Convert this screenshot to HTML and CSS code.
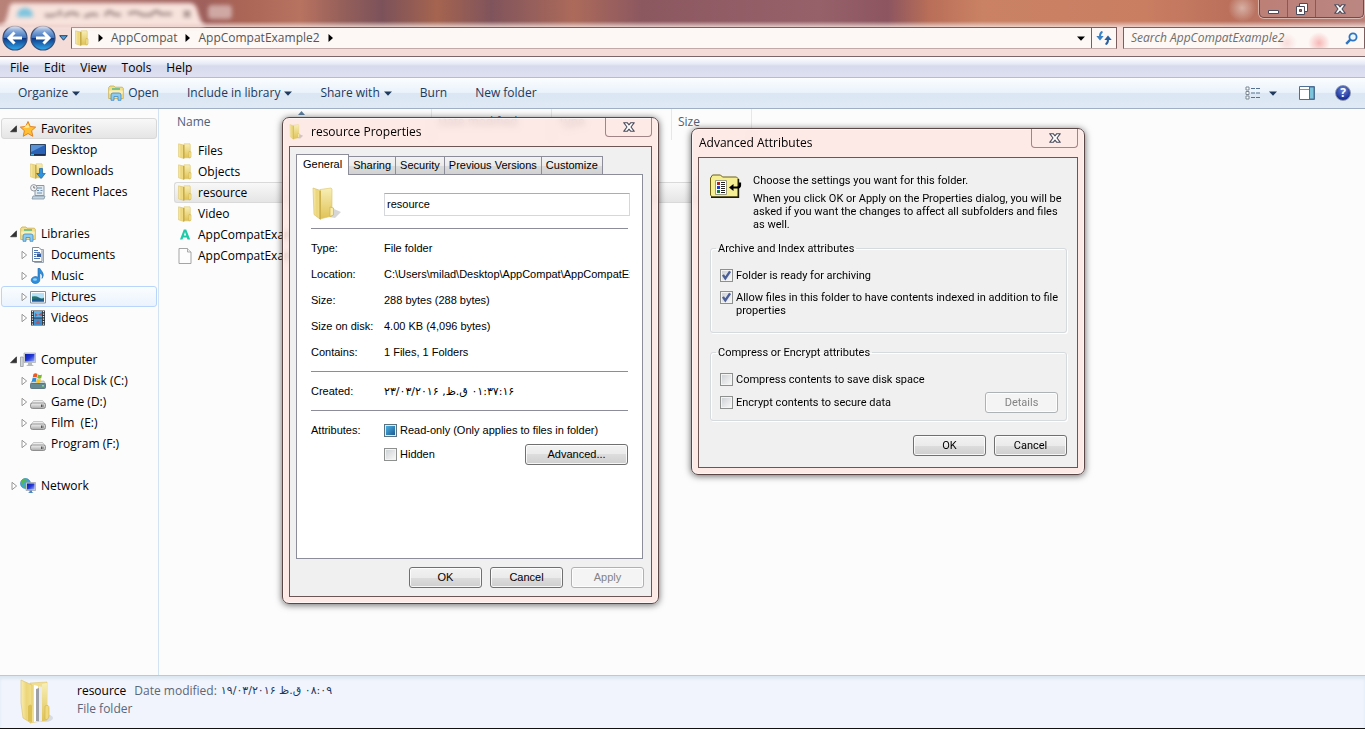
FILE: index.html
```html
<!DOCTYPE html>
<html lang="en">
<head>
<meta charset="utf-8">
<title>AppCompatExample2</title>
<link rel="stylesheet" href="styles.css">
</head>
<body>
<svg class="sprite" aria-hidden="true">
  <defs>
    <linearGradient id="gFold" x1="0" x2="1"><stop offset="0" stop-color="#f9eeb0"/><stop offset=".5" stop-color="#ecd57a"/><stop offset="1" stop-color="#f3e08a"/></linearGradient>
    <linearGradient id="gBack" x1="0" x2="0" y1="0" y2="1"><stop offset="0" stop-color="#f8efb6"/><stop offset="1" stop-color="#e0c255"/></linearGradient>
    <linearGradient id="gBlue" x1="0" x2="0" y1="0" y2="1"><stop offset="0" stop-color="#b9d3f0"/><stop offset=".48" stop-color="#3f73bd"/><stop offset=".5" stop-color="#0d3583"/><stop offset="1" stop-color="#2fa9ee"/></linearGradient>
    <linearGradient id="gScreen" x1="0" x2="1" y1="0" y2="1"><stop offset="0" stop-color="#0a1ea8"/><stop offset=".5" stop-color="#2438d8"/><stop offset="1" stop-color="#9fb2f5"/></linearGradient>
    <linearGradient id="gDrive" x1="0" x2="0" y1="0" y2="1"><stop offset="0" stop-color="#f4f4f4"/><stop offset="1" stop-color="#a9a9a9"/></linearGradient>
    <symbol id="folder" viewBox="0 0 16 16">
      <path d="M7 .8h6l.3 1v13H7z" fill="url(#gBack)" stroke="#d9bf62" stroke-width=".5"/>
      <path d="M1.500.8L6.800 2v13.500L1.500 13.800z" fill="url(#gFold)" stroke="#d8bd5a" stroke-width=".5"/>
      <path d="M6.800 2v13.500" stroke="#b4952f" stroke-width=".9"/>
      <path d="M12 8.500l2 .4v5.200l-2 .9z" fill="#f6e79b" stroke="#c8a93d" stroke-width=".5"/>
    </symbol>
    <symbol id="bigfolder" viewBox="0 0 32 34">
      <path d="M18 30l6 1 6-6-7-3z" fill="#000" opacity=".16"/>
      <path d="M9 2.500l11-1.500 1 1v27L9 32z" fill="url(#gBack)" stroke="#dcc467" stroke-width=".6"/>
      <path d="M2 1l7.500 2.500v29L3 27.500z" fill="url(#gFold)" stroke="#d5bc5c" stroke-width=".6"/>
      <path d="M9 4v28" stroke="#b99b35" stroke-width="1"/>
      <path d="M19 20l3.500 1v7L19 29.500z" fill="#f8ecae" stroke="#cfb24c" stroke-width=".7"/>
    </symbol>
    <symbol id="fullfolder" viewBox="0 0 36 46">
      <ellipse cx="25" cy="39" rx="8" ry="4" fill="#000" opacity=".1"/>
      <path d="M10 4l17-1v38l-17 3z" fill="#f1df8e" stroke="#d9bf66" stroke-width=".5"/>
      <path d="M14 6l4 1v35l-4 1z" fill="#fff"/><path d="M16 10l3-1v33h-3z" fill="#9da0a6"/><path d="M19 7l3 1v34l-3 1z" fill="#e9ebef"/>
      <path d="M22 5l5-1v37l-5 1z" fill="url(#gBack)"/>
      <path d="M1 1l11 5v20l-1 18L3 39 1 24z" fill="url(#gFold)" stroke="#d9bf66" stroke-width=".6"/>
      <path d="M8 27q3-3 4 0v16l-4-1z" fill="#dcbf55"/>
      <path d="M25 27q4-2 4 2v8q-1 5-4 3z" fill="#f0da7d" stroke="#d0b14c" stroke-width=".6"/>
    </symbol>
    <symbol id="lib" viewBox="0 0 16 16">
      <path d="M.7 13.500V2.500L2 1h4l1 1.200h7.300l1 1v10.300z" fill="#f2e08e" stroke="#c9ac4a" stroke-width=".8"/>
      <path d="M4 3h8v2H4z" fill="#7fc18a"/><path d="M1.200 5.500h13.600v3H1.200z" fill="#f9efba"/>
      <path d="M3 15.300V10q0-2 2-2h6q2 0 2 2v5.300h-3V11.500H6v3.800z" fill="#8ecbf0" stroke="#3f8cc6" stroke-width=".8"/>
    </symbol>
    <symbol id="star" viewBox="0 0 16 16"><path d="M8 .5l2.300 5 5.400.6-4.100 3.600 1.200 5.600L8 12.500l-4.800 2.800 1.200-5.600L.3 6.100l5.400-.6z" fill="#ffbf34" stroke="#e07b16" stroke-width=".9"/><path d="M8 3l1.500 3.500-6 .5z" fill="#fff0a0"/></symbol>
    <symbol id="desktop" viewBox="0 0 16 16"><path d="M.5 2.500h15v11H.5z" fill="#2a62b8" stroke="#30455f"/><path d="M1 3h14L1 10z" fill="#6fa8e4" opacity=".7"/><path d="M1 12h14v1.500H1z" fill="#1b2e52"/><path d="M1 12h3v1.500H1z" fill="#47b6e6"/></symbol>
    <symbol id="downloads" viewBox="0 0 16 16"><use href="#folder" x="-1"/><path d="M9.500 5.500h3v5h2.800L11 15.500l-4.300-5h2.800z" fill="#2d93e0" stroke="#1b66ad" stroke-width=".7"/></symbol>
    <symbol id="recent" viewBox="0 0 16 16"><path d="M5 1.500h9v10H5z" fill="#e2eaf1" stroke="#8b99a6"/><path d="M7 4h5M7 6.500h2M10.500 6.500h2M7 9h5" stroke="#6a8fb0"/><path d="M3 12h12l-1 3H2z" fill="#c4d4df" stroke="#8295a3" stroke-width=".8"/><circle cx="3.800" cy="3.800" r="3.200" fill="#f2f4f5" stroke="#8a9095" stroke-width=".9"/><path d="M3.800 2v2h1.500" fill="none" stroke="#555" stroke-width=".8"/></symbol>
    <symbol id="document" viewBox="0 0 16 16"><path d="M4.500 2.500h9v13h-9z" fill="#fff" stroke="#9aa5b3"/><path d="M2.500.5H9l3 3v11H2.500z" fill="#fff" stroke="#7f8c9c"/><path d="M4 3.500h4M4 5.500h6M4 7.500h2.500M4 9.500h2.500M4 11.500h6" stroke="#4c76b5"/><path d="M7 6.500h4v3.500H7z" fill="#335b9b"/></symbol>
    <symbol id="music" viewBox="0 0 16 16"><path d="M8 .3v8.900A4.300 3.500 0 1 0 9.800 12V5c2.200.8 3 2.600 2.200 5.400C15 6 12 4 9.800.3z" fill="#2f8fdb" stroke="#1b62a8" stroke-width=".6"/><ellipse cx="5" cy="11.500" rx="2" ry="1.300" fill="#8fd2fa"/></symbol>
    <symbol id="picture" viewBox="0 0 16 16"><path d="M.5 2.500h15v11.500H.5z" fill="#fff" stroke="#8191a2"/><path d="M2 4h12v8.500H2z" fill="#b5e1f8"/><path d="M2 7.500q4-1 7 1t5 0v4H2z" fill="#24756a"/><path d="M2 10.500q6-2 12 0v2H2z" fill="#1e5b94"/></symbol>
    <symbol id="video" viewBox="0 0 16 16"><path d="M1 .5h14v15H1z" fill="#2c333b"/><path d="M4 1h8v6.500H4z" fill="#5eb4e8"/><path d="M4 8.500h8V15H4z" fill="#3f8fd0"/><path d="M5 3l3 2 4-3v4l-4-1-3 2zM5 14l3-4 3 4z" fill="#a95a6a"/><path d="M2.500 1v14M13.500 1v14" stroke="#e9edf0" stroke-width="1.300" stroke-dasharray="1.300 1.200"/></symbol>
    <symbol id="computer" viewBox="0 0 16 16"><path d="M.5 5h2.700v9.500H.5z" fill="#d5d8da" stroke="#8d9296" stroke-width=".7"/><path d="M4 1h11.500v9.500H4z" fill="#d7dade" stroke="#999fa6" stroke-width=".6"/><path d="M5 2h9.500v7.500H5z" fill="url(#gScreen)"/><path d="M8 10.500h4v2l2 1.500H6l2-1.500z" fill="#b6babd"/></symbol>
    <symbol id="drive" viewBox="0 0 16 16"><path d="M3.500 6.500h9l3 3.500H.5z" fill="#ececec" stroke="#aaa" stroke-width=".6"/><rect x=".5" y="9" width="15" height="5.500" rx="2" fill="url(#gDrive)" stroke="#7e7e7e" stroke-width=".8"/><path d="M11 10.500h1.500v2.500H11z" fill="#555"/><path d="M13 10.500h1v2.500h-1z" fill="#83b37c"/></symbol>
    <symbol id="sysdrive" viewBox="0 0 16 16"><path d="M2 8h12l1.500 3H.5z" fill="#cdd9d6" stroke="#8d9b99" stroke-width=".6"/><rect x=".5" y="10.500" width="15" height="5" rx="1" fill="#648a94" stroke="#4c6873" stroke-width=".8"/><path d="M12 12h2v1.500h-2z" fill="#7fe07a"/><path d="M3.500 1q2-1.500 4 0L6.700 4.500q-2-1-4 0z" fill="#ea5a24"/><path d="M8 1.500q2 1 4 0l-.8 3.700q-2 1-4-.2z" fill="#7db928"/><path d="M2.500 5.300q2-1 4 0L5.700 9q-2-1.200-4 0z" fill="#2b8fdd"/><path d="M7 5.800q2 1 4 0l-.8 3.700q-2 1-4-.2z" fill="#fbc41d"/></symbol>
    <symbol id="network" viewBox="0 0 16 16"><circle cx="5.500" cy="5.500" r="5" fill="#3fa5e3" stroke="#2479b5" stroke-width=".6"/><path d="M1 4q2-4 5-3.300Q8 2 5 4T4 7 1 6zM4 8l3-1v3H5z" fill="#55b84e"/><path d="M6 4.500h9.500v8H6z" fill="#d5dae0" stroke="#8f969e" stroke-width=".6"/><path d="M7 5.500h7.500V11.500H7z" fill="url(#gScreen)"/><path d="M9.500 12.500h2.500v1.500l1.500 1H8l1.500-1z" fill="#4b86c6"/></symbol>
    <symbol id="file" viewBox="0 0 16 16"><path d="M2 .5h8.500L14 4v11.500H2z" fill="#fdfdfd" stroke="#9b9b9b" stroke-width=".9"/><path d="M10.500.5V4H14" fill="#eee" stroke="#9b9b9b" stroke-width=".8"/></symbol>
    <symbol id="appfile" viewBox="0 0 16 16"><path d="M3 12.500L6.800 2.500h2.400l4 10h-2.700l-.7-2H6.200l-.7 2zM6.900 8.500h2.300L8 5z" fill="#20c9a8" fill-rule="evenodd"/></symbol>
    <symbol id="open" viewBox="0 0 8 8"><path d="M6.500.8v6h-6z" fill="#333" stroke="#222" stroke-width=".6"/></symbol>
    <symbol id="shut" viewBox="0 0 8 8"><path d="M2 .3v7.400L6.600 4z" fill="#fff" stroke="#8c8c8c" stroke-width=".9"/></symbol>
    <symbol id="down" viewBox="0 0 8 5"><path d="M0 .5h8L4 4.700z" fill="currentColor"/></symbol>
    <symbol id="right" viewBox="0 0 5 8"><path d="M.5 0L5 4 .5 8z" fill="#000"/></symbol>
    <symbol id="close" viewBox="0 0 12 10"><path d="M.7.700h3.500L6 2.900 7.800.700h3.500L8 5l3.300 4.300H7.800L6 7.100 4.200 9.300H.700L4 5z" fill="#fff" stroke="#4a4b5c" stroke-width="1.100" stroke-linejoin="round"/></symbol>
  </defs>
</svg>

<main class="explorer">
  <header class="glass">
    <div class="caption">
      <svg class="ghost" viewBox="0 0 240 27" aria-hidden="true">
        <path d="M2 27Q7 20 9 8q1-5 5-5h176q5 0 7 6 3 12 8 18z" fill="#f8e2dc"/>
        <rect x="208" y="5" width="24" height="14" rx="4" fill="#cfa8a4"/>
        <path d="M17 17q0-9 8-9t8 9z" fill="#7cc4de"/>
        <path d="M45 15q6 2 12-1M60 10v6M64 16q9-6 15 0M84 17q10-5 14-1M105 16q4-8 8-2l8 1M128 14q8-4 14 1h9q6-7 9-1h12M184 11l6 6M190 11l-6 6" fill="none" stroke="#a08c88" stroke-width="3"/>
      </svg>
      <div class="winbuttons">
        <button aria-label="Minimize"><svg width="13" height="12" viewBox="0 0 13 12"><path d="M1.500 7.500h10v3h-10z" fill="#fff" stroke="#4a4b5c"/></svg></button>
        <button aria-label="Restore"><svg width="12" height="12" viewBox="0 0 12 12"><path d="M3.500.5h8v8h-8z" fill="#fff" stroke="#4a4b5c"/><path d="M.5 3.500h8v8h-8z" fill="#fff" stroke="#4a4b5c"/><path d="M3.500 6.500h2v2h-2z" fill="#8d6a6c" stroke="#4a4b5c"/></svg></button>
        <button class="wide" aria-label="Close"><svg width="12" height="10"><use href="#close"/></svg></button>
      </div>
    </div>
    <div class="addressrow">
      <button class="round" aria-label="Back"><svg width="26" height="26" viewBox="0 0 26 26"><circle cx="13" cy="13" r="12" fill="url(#gBlue)" stroke="#3a4d77" stroke-width="1.200"/><path d="M20 13H8M12.500 7.500L7 13l5.500 5.500" fill="none" stroke="#fff" stroke-width="3"/></svg></button>
      <button class="round" aria-label="Forward"><svg width="26" height="26" viewBox="0 0 26 26"><circle cx="13" cy="13" r="12" fill="url(#gBlue)" stroke="#3a4d77" stroke-width="1.200"/><path d="M6 13h12M13.500 7.500L19 13l-5.500 5.500" fill="none" stroke="#fff" stroke-width="3"/></svg></button>
      <button class="recentpages" aria-label="Recent pages"><svg width="9" height="6" viewBox="0 0 9 6"><path d="M.7.700h7.600L4.500 5.200z" fill="#4fa0dc" stroke="#1d3f66"/></svg></button>
      <nav class="address" aria-label="Address">
        <svg width="16" height="16"><use href="#folder"/></svg>
        <svg class="crumb" width="5" height="8"><use href="#right"/></svg>
        <a href="#">AppCompat</a>
        <svg class="crumb" width="5" height="8"><use href="#right"/></svg>
        <a href="#">AppCompatExample2</a>
        <svg class="crumb" width="5" height="8"><use href="#right"/></svg>
        <button class="drop" aria-label="Previous locations"><svg width="8" height="5"><use href="#down"/></svg></button>
        <button class="refresh" aria-label="Refresh"><svg width="16" height="14" viewBox="0 0 16 14"><path d="M6.500.8Q3.800 1.500 4 6" fill="none" stroke="#3a82c4" stroke-width="2"/><path d="M.3 5h7.400L4 9.500z" fill="#3a82c4"/><path d="M9.500 13.200q2.700-.7 2.500-5.200" fill="none" stroke="#2a5f9e" stroke-width="2"/><path d="M8.300 9h7.400L12 4.500z" fill="#2a5f9e"/></svg></button>
      </nav>
      <form class="search">
        <input type="search" aria-label="Search" placeholder="Search AppCompatExample2">
        <svg width="13" height="13" viewBox="0 0 13 13"><circle cx="8" cy="5" r="3.600" fill="#eef6fd" stroke="#2f74c0" stroke-width="1.800"/><path d="M5.300 7.700L1.200 11.800" stroke="#2f74c0" stroke-width="2.400"/></svg>
      </form>
    </div>
  </header>

  <nav class="menubar" aria-label="Menu">
    <button>File</button><button>Edit</button><button>View</button><button>Tools</button><button>Help</button>
  </nav>

  <div class="toolbar">
    <button>Organize <svg width="8" height="5"><use href="#down"/></svg></button>
    <button><svg width="16" height="16"><use href="#lib"/></svg>Open</button>
    <button>Include in library <svg width="8" height="5"><use href="#down"/></svg></button>
    <button>Share with <svg width="8" height="5"><use href="#down"/></svg></button>
    <button>Burn</button>
    <button>New folder</button>
    <div class="tools">
      <button aria-label="Change view"><svg width="16" height="14" viewBox="0 0 16 14"><path d="M1 1h3v3H1zM1 5.500h3v3H1zM1 10h3v3H1z" fill="#fff" stroke="#7b8794"/><path d="M6 2.500h4M11 2.500h4M6 7h4M11 7h4M6 11.500h4M11 11.500h4" stroke="#56708f"/></svg></button>
      <button aria-label="More views"><svg width="8" height="5"><use href="#down"/></svg></button>
      <button class="pane" aria-label="Preview pane"><svg width="16" height="14" viewBox="0 0 16 14"><path d="M.5.5h15v13H.5z" fill="#fff" stroke="#4e6f93"/><path d="M1 3.500h9.500" stroke="#7a96b3"/><path d="M10.500 1h4.500v12h-4.500z" fill="#7cc3dc" stroke="#4e6f93"/></svg></button>
      <button class="help" aria-label="Help">?</button>
    </div>
  </div>

  <div class="content">
    <nav class="tree" aria-label="Folders">
      <ul>
        <li class="head current"><svg class="tw"><use href="#open"/></svg><svg class="ic"><use href="#star"/></svg>Favorites</li>
        <li><svg class="ic"><use href="#desktop"/></svg>Desktop</li>
        <li><svg class="ic"><use href="#downloads"/></svg>Downloads</li>
        <li><svg class="ic"><use href="#recent"/></svg>Recent Places</li>
      </ul>
      <ul>
        <li class="head"><svg class="tw"><use href="#open"/></svg><svg class="ic"><use href="#lib"/></svg>Libraries</li>
        <li><svg class="tw"><use href="#shut"/></svg><svg class="ic"><use href="#document"/></svg>Documents</li>
        <li><svg class="tw"><use href="#shut"/></svg><svg class="ic"><use href="#music"/></svg>Music</li>
        <li class="hover"><svg class="tw"><use href="#shut"/></svg><svg class="ic"><use href="#picture"/></svg>Pictures</li>
        <li><svg class="tw"><use href="#shut"/></svg><svg class="ic"><use href="#video"/></svg>Videos</li>
      </ul>
      <ul>
        <li class="head"><svg class="tw"><use href="#open"/></svg><svg class="ic"><use href="#computer"/></svg>Computer</li>
        <li><svg class="tw"><use href="#shut"/></svg><svg class="ic"><use href="#sysdrive"/></svg>Local Disk (C:)</li>
        <li><svg class="tw"><use href="#shut"/></svg><svg class="ic"><use href="#drive"/></svg>Game (D:)</li>
        <li><svg class="tw"><use href="#shut"/></svg><svg class="ic"><use href="#drive"/></svg>Film&nbsp; (E:)</li>
        <li><svg class="tw"><use href="#shut"/></svg><svg class="ic"><use href="#drive"/></svg>Program (F:)</li>
      </ul>
      <ul>
        <li class="head"><svg class="tw"><use href="#shut"/></svg><svg class="ic"><use href="#network"/></svg>Network</li>
      </ul>
    </nav>

    <section class="files">
      <table>
        <colgroup><col class="cname"><col class="cdate"><col class="cdate"><col class="csize"></colgroup>
        <thead><tr><th class="sorted">Name<svg width="7" height="4" viewBox="0 0 7 4"><path d="M0 4l3.500-4L7 4z" fill="#5b7f9f"/></svg></th><th>Date modified</th><th>Type</th><th>Size</th></tr></thead>
        <tbody>
          <tr><td><svg class="ic"><use href="#folder"/></svg>Files</td><td></td><td></td><td></td></tr>
          <tr><td><svg class="ic"><use href="#folder"/></svg>Objects</td><td></td><td></td><td></td></tr>
          <tr class="selected"><td><svg class="ic"><use href="#folder"/></svg>resource</td><td></td><td></td><td></td></tr>
          <tr><td><svg class="ic"><use href="#folder"/></svg>Video</td><td></td><td></td><td></td></tr>
          <tr><td><svg class="ic"><use href="#appfile"/></svg>AppCompatExample2</td><td></td><td></td><td></td></tr>
          <tr><td><svg class="ic"><use href="#file"/></svg>AppCompatExample2</td><td></td><td></td><td></td></tr>
        </tbody>
      </table>
    </section>
  </div>

  <footer class="details">
    <svg width="36" height="46"><use href="#fullfolder"/></svg>
    <div>
      <p><strong>resource</strong><span>Date modified:</span><span class="date"><bdi dir="ltr">۱۹/۰۳/۲۰۱۶</bdi> <bdi dir="rtl">ق.ظ</bdi> <bdi dir="ltr">۰۸:۰۹</bdi></span></p>
      <p>File folder</p>
    </div>
  </footer>
</main>

<section class="window properties" role="dialog" aria-labelledby="t1">
  <header class="wintitle">
    <svg width="15" height="16"><use href="#bigfolder"/></svg>
    <h2 id="t1">resource Properties</h2>
    <button class="winclose" aria-label="Close"><svg width="12" height="10"><use href="#close"/></svg></button>
  </header>
  <div class="client">
    <div class="tabs" role="tablist">
      <button role="tab" class="active" aria-selected="true">General</button><button role="tab">Sharing</button><button role="tab">Security</button><button role="tab">Previous Versions</button><button role="tab">Customize</button>
    </div>
    <div class="panel">
      <div class="field top"><svg width="32" height="34"><use href="#bigfolder"/></svg><input type="text" aria-label="Name" value="resource"></div>
      <hr>
      <dl>
        <dt>Type:</dt><dd>File folder</dd>
        <dt>Location:</dt><dd>C:\Users\milad\Desktop\AppCompat\AppCompatExample2</dd>
        <dt>Size:</dt><dd>288 bytes (288 bytes)</dd>
        <dt>Size on disk:</dt><dd>4.00 KB (4,096 bytes)</dd>
        <dt>Contains:</dt><dd>1 Files, 1 Folders</dd>
      </dl>
      <hr>
      <dl>
        <dt>Created:</dt><dd class="date"><bdi dir="ltr">۲۳/۰۳/۲۰۱۶</bdi> ,<bdi dir="rtl">ق.ظ</bdi> <bdi dir="ltr">۰۱:۳۷:۱۶</bdi></dd>
      </dl>
      <hr>
      <div class="field attrs">
        <span>Attributes:</span>
        <div>
          <label><input type="checkbox" class="mixed" checked>Read-only (Only applies to files in folder)</label>
          <div class="split"><label><input type="checkbox">Hidden</label><button class="push advanced">Advanced...</button></div>
        </div>
      </div>
    </div>
    <div class="actions"><button class="push">OK</button><button class="push">Cancel</button><button class="push" disabled>Apply</button></div>
  </div>
</section>

<section class="window advancedattrs" role="dialog" aria-labelledby="t2">
  <header class="wintitle">
    <h2 id="t2">Advanced Attributes</h2>
    <button class="winclose" aria-label="Close"><svg width="12" height="10"><use href="#close"/></svg></button>
  </header>
  <div class="client">
    <div class="intro">
      <svg width="32" height="25" viewBox="0 0 32 25"><path d="M.5 4l2-3h8l2 2h14l1.500 1.500v18.500H2l-1.500-2z" fill="#f5ee92" stroke="#6d6110"/><path d="M1 23.300h27.500V5" fill="none" stroke="#1c1a08" stroke-width="1.400"/><path d="M5.500 6.500h11v14h-11z" fill="#fff" stroke="#9a9a80"/><path d="M7 8h3v3H7z" fill="#b3261e"/><path d="M7 12h3v3H7z" fill="#1b3fd0"/><path d="M7 16h3v3H7z" fill="#1d7a36"/><path d="M11 8.500h4M11 10.500h4M11 12.500h4M11 14.500h4M11 16.500h4M11 18.500h4" stroke="#222"/><path d="M30 8.500v3q0 2-3 2h-4" fill="none" stroke="#000" stroke-width="2.200"/><path d="M19 13.500l4.500-3.500v7z" fill="#000"/></svg>
      <div><p>Choose the settings you want for this folder.</p><p>When you click OK or Apply on the Properties dialog, you will be asked if you want the changes to affect all subfolders and files as well.</p></div>
    </div>
    <fieldset>
      <legend>Archive and Index attributes</legend>
      <label><input type="checkbox" checked>Folder is ready for archiving</label>
      <label><input type="checkbox" checked>Allow files in this folder to have contents indexed in addition to file properties</label>
    </fieldset>
    <fieldset class="compress">
      <legend>Compress or Encrypt attributes</legend>
      <label><input type="checkbox">Compress contents to save disk space</label>
      <div class="split"><label><input type="checkbox">Encrypt contents to secure data</label><button class="push" disabled>Details</button></div>
    </fieldset>
    <div class="actions"><button class="push">OK</button><button class="push">Cancel</button></div>
  </div>
</section>
</body>
</html>
```

FILE: styles.css
```css
* { box-sizing: border-box; }
body { margin: 0; font: 12px/16px "Open Sans", "DejaVu Sans", sans-serif; color: #000; overflow: hidden; }
button, input { font: inherit; color: inherit; }
button { background: none; border: 0; padding: 0; display: inline-flex; align-items: center; justify-content: center; }
svg { flex: none; display: block; }
ul, dl, dd, p, h2 { margin: 0; padding: 0; list-style: none; font-weight: normal; font-size: inherit; }
a { color: inherit; text-decoration: none; }
.sprite { position: absolute; width: 0; height: 0; }
.ic { width: 16px; height: 16px; }
.tw { width: 8px; height: 8px; }

.explorer { display: flex; flex-direction: column; height: 100vh; border-bottom: 1px solid #111; }

/* glass frame */
.glass {
  border-bottom: 1px solid #7b6568;
  background:
    linear-gradient(to bottom, rgba(244,221,217,0) 21px, #f4ddd9 28px),
    radial-gradient(circle 14px at 91% 8px, #d6b0a4, transparent),
    radial-gradient(ellipse 60px 20px at 52% 90%, rgba(180,110,96,.6), transparent),
    linear-gradient(to right, #b98279 0, #9f605c 15%, #ac6656 18%, #b87260 22%, #96605a 25%, #7c525a 28%, #a5644f 32%, #80545c 36%, #ac6a5a 42%, #8c5860 47%, #97616a 60%, #8c5560 65%, #b86e58 68%, #ca8264 72%, #c97e62 84%, #bb705c 90%, #b88078 100%);
}
.caption { height: 25px; display: flex; justify-content: space-between; align-items: flex-start; }
.ghost { width: 240px; height: 27px; filter: blur(2px); margin-bottom: -2px; }
.winbuttons { display: flex; height: 18px; margin-right: 1px; border: 1px solid #6d4a4e; border-top: 0; border-radius: 0 0 5px 5px; box-shadow: 0 0 0 1px rgba(255,255,255,.45); background: rgba(190,140,140,.5); }
.winbuttons button { width: 28px; border-right: 1px solid #805c60; }
.winbuttons .wide { width: 47px; border-right: 0; }
.addressrow { display: flex; align-items: center; height: 31px; padding: 0 0 5px 2px; }
.round { margin-right: 2px; }
.recentpages { margin: 0 3px 0 1px; }
.address { flex: 1; display: flex; align-items: center; height: 22px; padding-left: 2px; border: 1px solid #7b5d5d; border-bottom-color: #c2aaa8; background: #fdf8f5; color: #555; }
.crumb { margin: 0 8px; }
.drop { margin-left: auto; width: 20px; color: #000; }
.refresh { width: 25px; align-self: stretch; border-left: 1px solid #7b5d5d; }
.search { width: 242px; height: 22px; margin-left: 6px; display: flex; align-items: center; border: 1px solid #7b5d5d; border-bottom-color: #c2aaa8; padding: 0 6px 0 7px; background: radial-gradient(circle at 195px 15px, rgba(240,120,120,.5), transparent 11px), radial-gradient(circle at 163px 15px, rgba(240,180,180,.4), transparent 10px), #fdf8f5; }
.search input { flex: 1; min-width: 0; border: 0; padding: 0; background: none; outline: 0; font-style: italic; }
.search input::placeholder { color: #6d6d6d; opacity: 1; }

.menubar { display: flex; gap: 15px; height: 21px; padding: 2px 0 0 10px; background: linear-gradient(#fff, #e6eaf5 35%, #d6daec 45%, #dfe1f2); border-bottom: 1px solid #b6bccc; }
.toolbar { display: flex; height: 31px; padding: 0 14px 0 18px; color: #1e395b; background: linear-gradient(#fbfdff, #eaf2fb 48%, #dbe6f4 52%, #e0eaf6); border-bottom: 1px solid #a0afc3; }
.toolbar button { gap: 4px; margin-right: 28px; }
.tools { display: flex; margin-left: auto; }
.toolbar .tools button { margin: 0 0 0 8px; }
.toolbar .tools .help { margin-left: 20px; }
.toolbar .tools .pane { margin-left: 22px; }
.toolbar .tools .help { align-self: center; width: 16px; height: 16px; border-radius: 50%; background: radial-gradient(circle at 50% 30%, #6c86d8, #1c349a 70%); border: 1px solid #8a93a8; color: #fff; font-weight: bold; }

.content { flex: 1; min-height: 0; display: flex; background: #fcfcfc; }
.tree { width: 159px; padding: 9px 1px 0; border-right: 1px solid #d3e3f1; }
.tree ul { margin-bottom: 21px; }
.tree li { display: flex; align-items: center; height: 21px; padding-left: 28px; border: 1px solid transparent; border-radius: 3px; white-space: nowrap; }
.tree .ic { margin-right: 5px; }
.tree li:has(.tw) { padding-left: 18px; }
.tree li .tw { margin-right: 2px; }
.tree li.head { padding-left: 8px; }
.tree .current { border-color: #d8d8d8; background: linear-gradient(#f8f8f8, #e5e5e5); }
.tree .hover { border-color: #b8d6fb; background: linear-gradient(#fbfdff, #ebf3fd); }

.files { flex: 1; min-width: 0; padding-left: 15px; }
table { table-layout: fixed; width: 578px; border-spacing: 0; }
.cname { width: 258px; }
.cdate { width: 120px; }
.csize { width: 80px; }
th { height: 31px; padding: 0 6px 5px; text-align: left; font-weight: normal; color: #4c607a; border-right: 1px solid #e3e8ee; position: relative; }
th:first-child { padding-left: 3px; }
.sorted svg { position: absolute; top: 2px; left: 124px; }
td { height: 21px; padding: 1px 0 0 3px; border: 1px solid transparent; border-width: 1px 0; white-space: nowrap; }
td .ic { float: left; margin-right: 5px; }
.selected td { border-color: #d9d9d9; background: linear-gradient(#f8f8f8, #e5e5e5); }
.selected td:first-child { border-left-width: 1px; border-radius: 3px 0 0 3px; padding-left: 2px; }

.details { display: flex; height: 53px; padding: 3px 20px; gap: 21px; border-top: 1px solid #b5cbdc; box-shadow: inset 0 3px 3px #dce7f2; background: #f1f4fc; color: #5a6779; }
.details p { display: flex; height: 18px; align-items: center; margin-top: 0; }
.details div { padding-top: 3px; }
.details strong { font-weight: normal; color: #000; margin-right: 8px; }
.details .date { color: #1e395b; margin-left: 4px; font-size: 11px; }
.date { font-family: "DejaVu Sans", sans-serif; }

/* dialogs */
.window { position: absolute; display: flex; flex-direction: column; padding: 0 6px 6px; border: 1px solid #5c4747; border-radius: 7px; background: rgba(253,228,223,.8); backdrop-filter: blur(3px); box-shadow: inset 0 0 0 1px rgba(255,255,255,.6), 0 1px 7px rgba(0,0,0,.6); }
.properties { left: 282px; top: 117px; width: 377px; font-family: "Liberation Sans", sans-serif; font-size: 11px; line-height: 13px; }
.advancedattrs { left: 691px; top: 128px; width: 394px; font-family: Roboto, sans-serif; font-size: 11px; line-height: 13px; }
.wintitle { display: flex; height: 28px; align-items: center; font: 12px/16px "Open Sans", sans-serif; }
.wintitle h2 { margin-left: 1px; }
.wintitle svg + h2 { margin-left: 7px; }
.winclose { align-self: flex-start; margin-left: auto; width: 47px; height: 19px; border: 1px solid #a08486; border-top: 0; border-radius: 0 0 4px 4px; }
.client { border: 1px solid #6b5555; background: #f0f0f0; }
.properties .client { padding: 7px 7px 8px 6px; }
.tabs { display: flex; align-items: flex-end; }
.tabs button { height: 18px; padding: 0 4px; border: 1px solid #8b8e98; border-left-width: 0; border-bottom: 0; background: linear-gradient(#f3f3f3, #ebebeb 50%, #dcdcdc 50%, #d2d2d2); }
.tabs .active { height: 21px; padding: 0 6px 2px; border-left-width: 1px; background: #fff; margin-bottom: -1px; z-index: 1; }
.panel { height: 385px; padding: 12px 14px 0; margin-right: 1px; border: 1px solid #8b8e98; background: #fff; }
.field { display: flex; }
.top { align-items: center; height: 34px; }
.top input { margin-left: auto; width: 246px; height: 23px; padding: 0 2px; border: 1px solid #d5d7dd; border-top-color: #abadb3; margin-right: -2px; }
.panel hr { height: 1px; margin: 7px 0; border: 0; background: #8b8e98; }
.panel dl { display: grid; grid-template-columns: 73px 1fr; row-gap: 13px; padding: 6px 0 5px; margin-right: -2px; }
.panel dd { overflow: hidden; white-space: nowrap; }
.attrs { padding-top: 6px; }
.attrs > span { width: 73px; }
.attrs > div { flex: 1; }
label { display: flex; align-items: flex-start; gap: 3px; }
.split { display: flex; align-items: center; justify-content: space-between; margin-top: 7px; }
input[type=checkbox] { appearance: none; flex: none; width: 13px; height: 13px; margin: 0; border: 1px solid #8e8f8f; background: linear-gradient(135deg, #cfd3d6, #f6f6f6) content-box, #f4f4f4; padding: 1px; }
input[type=checkbox]:checked { background: url("data:image/svg+xml,%3Csvg xmlns='http://www.w3.org/2000/svg' viewBox='0 0 11 11'%3E%3Cpath d='M2.500 5l2 3L8.500 2' fill='none' stroke='%234a5f97' stroke-width='2'/%3E%3C/svg%3E") border-box, linear-gradient(135deg, #cfd3d6, #f6f6f6) content-box, #f4f4f4; }
input[type=checkbox].mixed { padding: 1px; background: linear-gradient(135deg, #4bb0e0, #1c5c94) content-box, #d8eef8; box-shadow: inset 0 0 0 1px #d8eef8; border-color: #5c7180; }
.push { width: 73px; height: 21px; border: 1px solid #707070; border-radius: 3px; background: linear-gradient(#f2f2f2, #ebebeb 50%, #dddddd 50%, #cfcfcf); box-shadow: inset 0 0 0 1px rgba(255,255,255,.8); }
.push:disabled { color: #838383; border-color: #adb2b5; background: #f4f4f4; }
.advanced { width: 103px; }
.actions { display: flex; justify-content: flex-end; gap: 8px; margin-top: 8px; }

.advancedattrs .client { padding: 16px 10px 11px 11px; }
.intro { display: flex; gap: 11px; }
.intro p + p { margin-top: 5px; }
fieldset { min-width: 0; margin: 11px 0 0; padding: 14px 3px 15px 9px; border: 1px solid #d5dadc; border-radius: 3px; box-shadow: inset 1px 1px #fff, 1px 1px #fff; }
legend { margin-left: -4px; padding: 0 2px; }
fieldset label + label { margin-top: 9px; }
fieldset.compress { margin-top: 13px; padding-bottom: 7px; padding-right: 8px; }
.compress .split { margin-top: 6px; }
.advancedattrs .actions { margin-top: 14px; }
```
